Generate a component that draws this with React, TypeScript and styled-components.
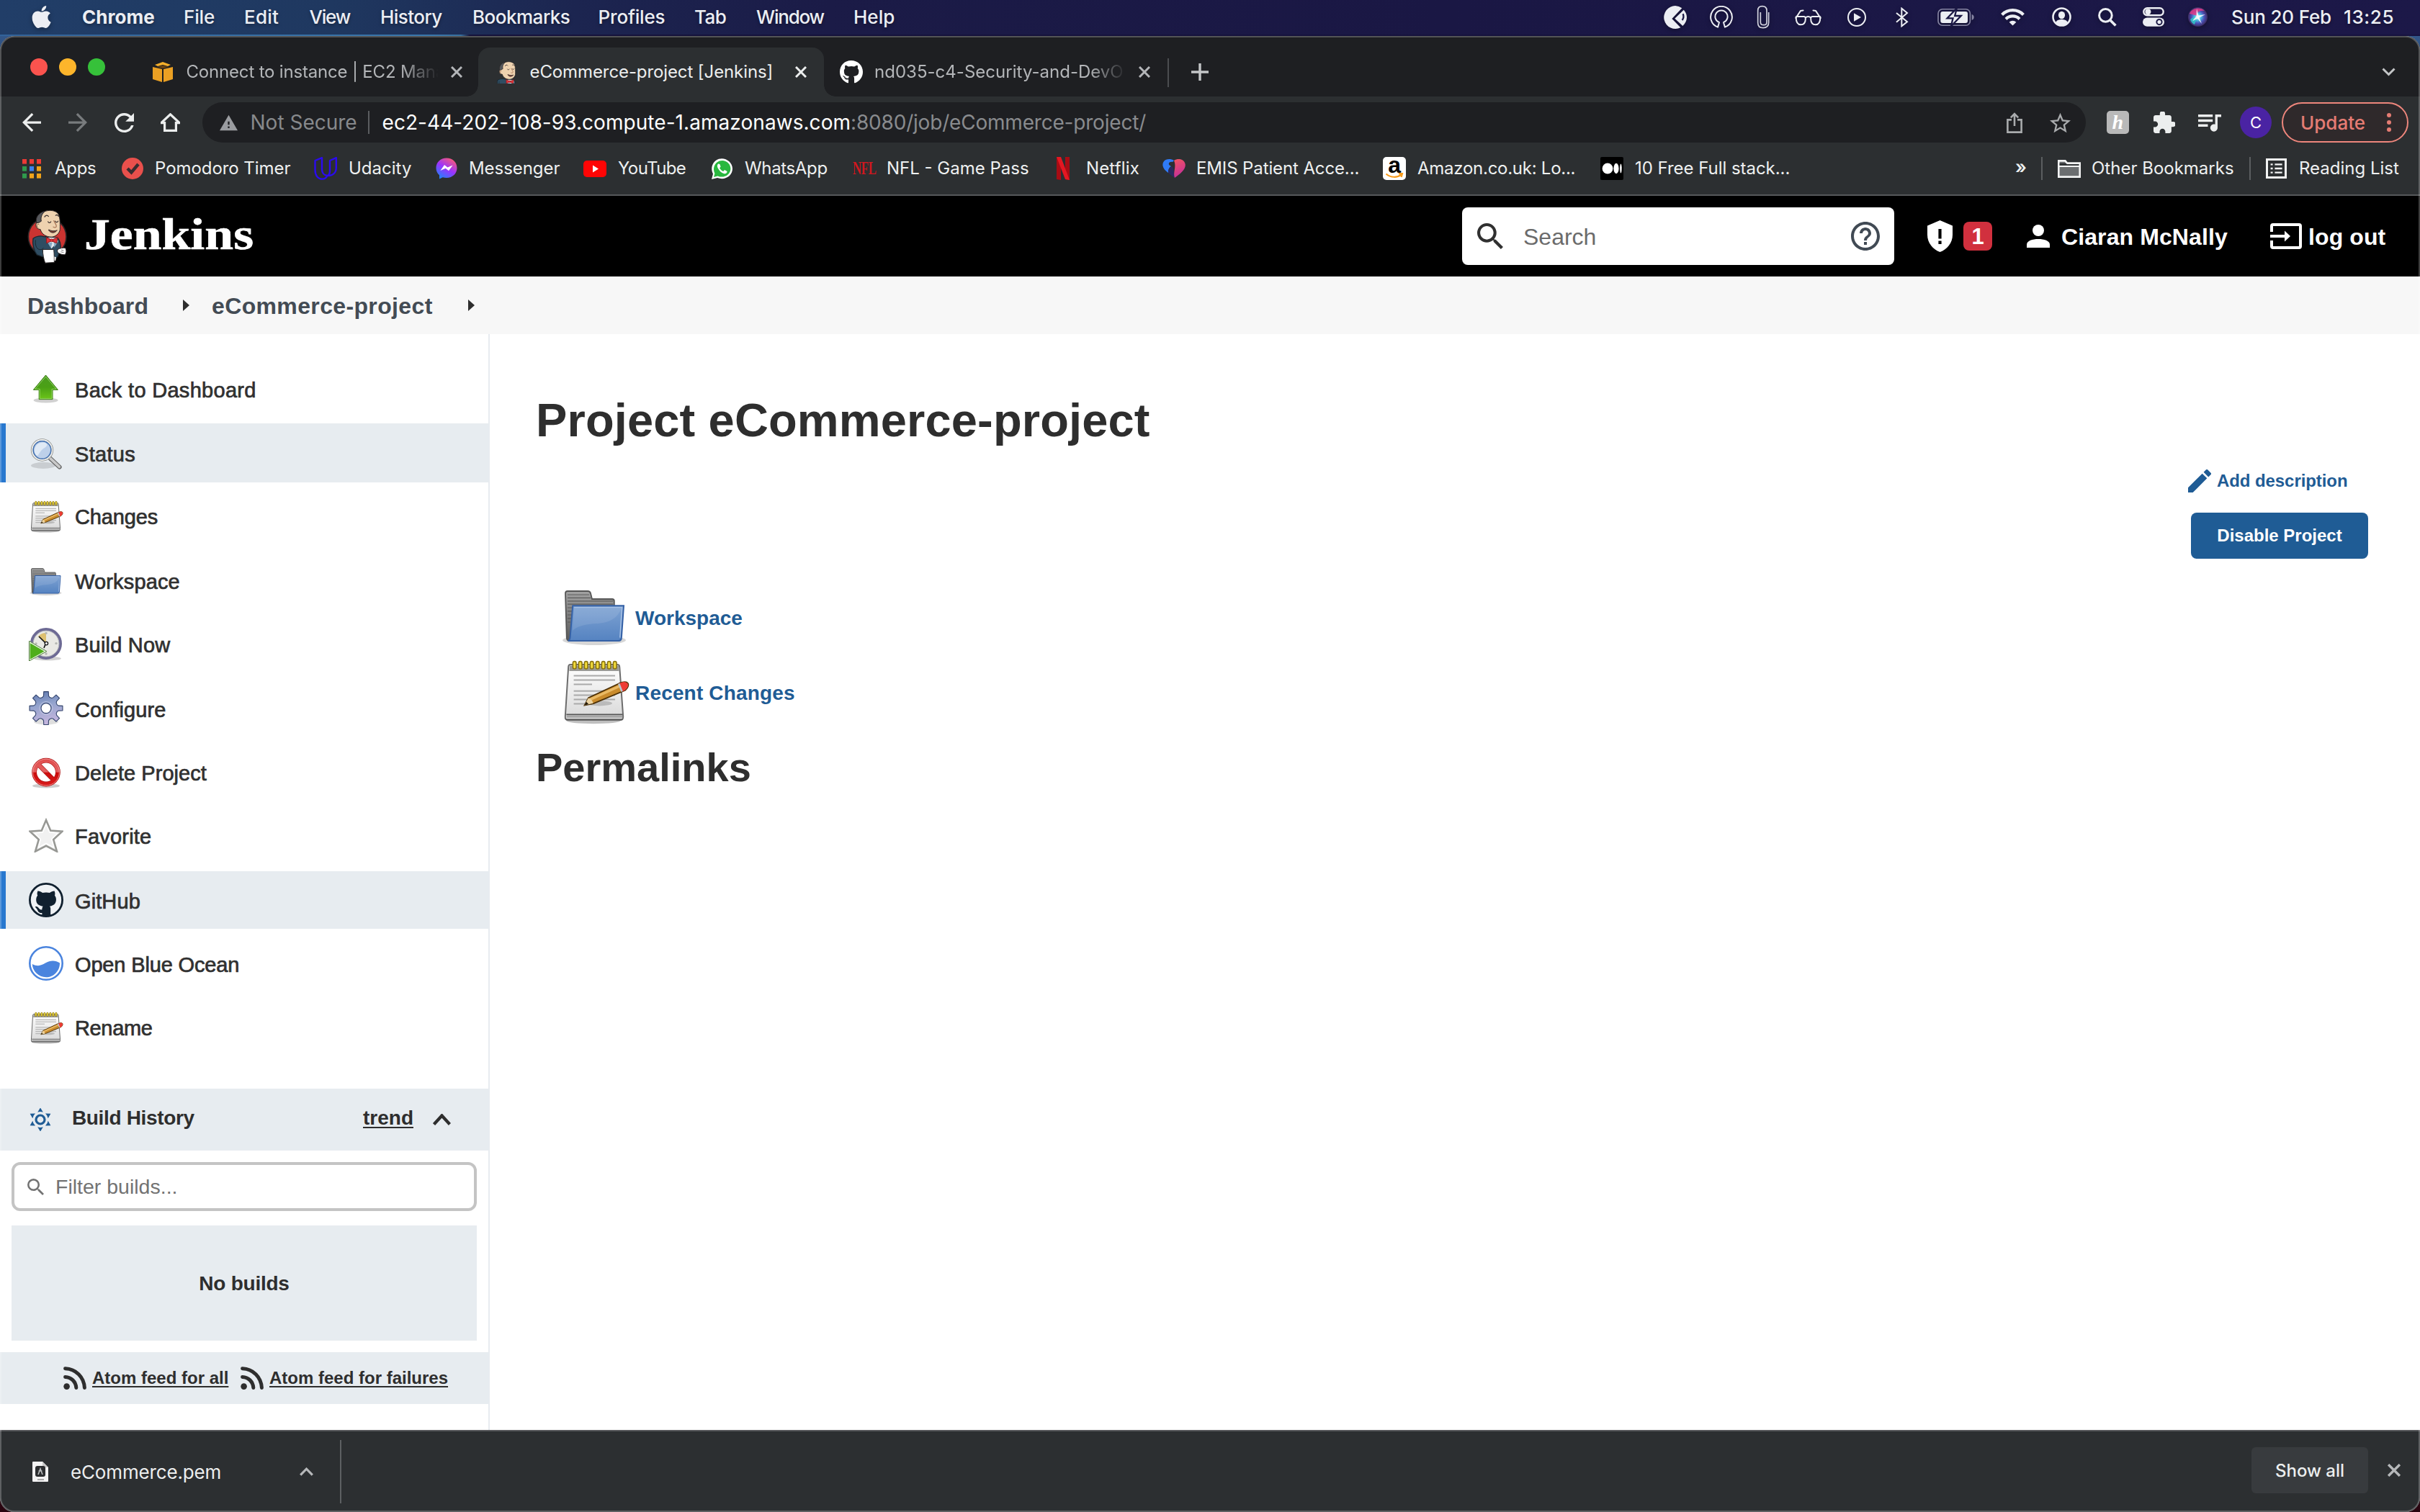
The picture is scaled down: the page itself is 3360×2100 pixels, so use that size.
import React from "react";
import styled, { createGlobalStyle, css } from "styled-components";
import {
  MdArrowBack, MdArrowForward, MdRefresh, MdWarning, MdStarBorder, MdExtension,
  MdQueueMusic, MdEdit, MdSearch, MdHelpOutline,
} from "react-icons/md";
import { FaGithub, FaApple } from "react-icons/fa";

const UI = `Inter, "Open Sans", sans-serif`;
const HELV = `"Liberation Sans", Arial, sans-serif`;

const Global = createGlobalStyle`
  html, body, #root { margin: 0; padding: 0; width: 3360px; height: 2100px; overflow: hidden; }
  body { background: #12060c; }
  * { box-sizing: border-box; }
  svg { display: block; flex: none; }
  h1, h2 { margin: 0; }
`;

const Desktop = styled.div`
  width: 3360px;
  height: 2100px;
  display: flex;
  flex-direction: column;
  background: linear-gradient(180deg, #3d6da3 0, #2c4a7a 80px, #2a0510 2000px);
  font-family: ${UI};
`;

/* ---------- menu bar ---------- */
const MenuBar = styled.div`
  height: 50px;
  flex: none;
  display: flex;
  align-items: center;
  padding: 0 37px 3px 42px;
  color: #eceef3;
  background:
    linear-gradient(90deg, #32639a 0, #3a78ad 600px, #38709f 640px, #15123a 652px, #17133f 100%) 0 48px / 100% 2px no-repeat,
    linear-gradient(90deg, #213e68 0, #1f3860 460px, #1c2550 800px, #1b1b47 1150px, #1a1744 2000px, #1c1848 100%);
  svg { filter: drop-shadow(0 2px 3px rgba(0, 0, 0, 0.35)); }
`;
const Slot = styled.span<{ $w: number; $ls?: number; $bold?: boolean }>`
  width: ${(p) => p.$w}px;
  flex: none;
  white-space: pre;
  font-size: 26px;
  line-height: 40px;
  font-weight: ${(p) => (p.$bold ? 700 : 500)};
  letter-spacing: ${(p) => p.$ls ?? 0}px;
  text-shadow: 0 2px 4px rgba(0, 0, 0, 0.35);
`;
const Spacer = styled.div`
  flex: 1;
`;
const StatusSlot = styled.span<{ $w: number }>`
  width: ${(p) => p.$w}px;
  flex: none;
  display: flex;
  align-items: center;
`;

/* ---------- window ---------- */
const Window = styled.div`
  position: relative;
  height: 2050px;
  flex: none;
  display: flex;
  flex-direction: column;
  border-radius: 20px;
  overflow: hidden;
  background: #fff;
  &::after {
    content: "";
    position: absolute;
    inset: 0;
    border: 2px solid rgba(255, 255, 255, 0.24);
    border-radius: 20px;
    pointer-events: none;
  }
`;
const TabStrip = styled.div`
  height: 84px;
  flex: none;
  display: flex;
  align-items: flex-start;
  background: #1e1f22;
`;
const Lights = styled.div`
  width: 188px;
  flex: none;
  display: flex;
  gap: 16px;
  padding: 31px 0 0 42px;
`;
const Light = styled.span<{ $c: string }>`
  width: 24px;
  height: 24px;
  border-radius: 50%;
  background: ${(p) => p.$c};
`;
const Tab = styled.div<{ $w: number; $active?: boolean; $pad: number }>`
  position: relative;
  width: ${(p) => p.$w}px;
  height: 68px;
  margin-top: 16px;
  padding: 0 24px 0 ${(p) => p.$pad}px;
  flex: none;
  display: flex;
  align-items: center;
  color: ${(p) => (p.$active ? "#eceeee" : "#b4b6b9")};
  ${(p) =>
    p.$active &&
    css`
      background: #2c2f31;
      border-radius: 16px 16px 0 0;
      &::before, &::after {
        content: "";
        position: absolute;
        bottom: 0;
        width: 16px;
        height: 16px;
      }
      &::before { left: -16px; background: radial-gradient(circle at 0 0, transparent 15.5px, #2c2f31 16px); }
      &::after { right: -16px; background: radial-gradient(circle at 100% 0, transparent 15.5px, #2c2f31 16px); }
    `}
`;
const TabIcon = styled.span<{ $w: number }>`
  width: ${(p) => p.$w}px;
  flex: none;
  display: flex;
`;
const TabTitle = styled.span<{ $w: number; $fade?: boolean; $ls: number }>`
  width: ${(p) => p.$w}px;
  margin-right: ${(p) => (p.$fade ? 17 : 0)}px;
  flex: none;
  overflow: hidden;
  white-space: nowrap;
  font-size: 24px;
  line-height: 34px;
  letter-spacing: ${(p) => p.$ls}px;
  ${(p) => p.$fade && css`mask-image: linear-gradient(90deg, #000 calc(100% - 52px), transparent 100%);`}
`;
const TabEdge = styled.span`
  width: 2px;
  height: 40px;
  margin-top: 31px;
  background: #4b4d50;
`;
const NewTab = styled.span`
  margin: 38px 0 0 31px;
`;
const TabMenu = styled.span`
  margin: 44px 34px 0 auto;
`;

const Toolbar = styled.div`
  height: 72px;
  flex: none;
  display: flex;
  align-items: center;
  padding: 0 16px 0 31px;
  background: #2c2f31;
  color: #eceeee;
`;
const NavSlot = styled.span<{ $w: number; $dim?: boolean }>`
  width: ${(p) => p.$w}px;
  flex: none;
  display: flex;
  ${(p) => p.$dim && css`color: #787b7d;`}
`;
const Omnibox = styled.div`
  width: 2615px;
  height: 56px;
  flex: none;
  display: flex;
  align-items: center;
  padding: 0 21px 0 24px;
  margin-right: 29px;
  border-radius: 28px;
  background: #1e1f22;
  color: #a9abad;
  font-size: 28px;
  line-height: 40px;
`;
const Insecure = styled.span`
  width: 163px;
  margin-left: 18px;
  color: #87898c;
`;
const OmniRule = styled.span`
  width: 2px;
  height: 32px;
  background: #5b5d60;
`;
const Url = styled.span`
  margin-left: 18px;
  color: #fff;
  letter-spacing: 0.06px;
`;
const UrlRest = styled.span`
  color: #898b8e;
  letter-spacing: -0.2px;
`;
const OmniEnd = styled.span`
  margin-left: auto;
  display: flex;
  align-items: center;
  gap: 38px;
`;
const Honey = styled.span`
  width: 32px;
  height: 32px;
  margin-right: 34px;
  border-radius: 5px;
  display: flex;
  align-items: center;
  justify-content: center;
  background: #b9b9b9;
  color: #fff;
  font: italic 700 28px/30px "Liberation Serif", serif;
`;
const Avatar = styled.span`
  width: 44px;
  height: 44px;
  margin-right: 14px;
  border-radius: 50%;
  display: flex;
  align-items: center;
  justify-content: center;
  background: #4a23a3;
  color: #fff;
  font-size: 22px;
`;
const UpdatePill = styled.span`
  width: 176px;
  height: 56px;
  flex: none;
  display: flex;
  align-items: center;
  padding: 1px 0 0 24px;
  border: 2.5px solid #ee867c;
  border-radius: 28px;
  background: #2f292b;
  color: #e57c73;
  font-size: 26px;
  font-weight: 500;
  svg { margin: -1px 0 0 29px; }
`;

const Bookmarks = styled.div`
  height: 66px;
  flex: none;
  display: flex;
  align-items: center;
  padding: 0 29px 8px 28px;
  border-bottom: 2px solid #55585a;
  background: #2c2f31;
  color: #eef0f0;
  font-size: 24px;
  line-height: 34px;
`;
const Bookmark = styled.span<{ $w: number; $pad?: number; $ls?: number }>`
  width: ${(p) => p.$w}px;
  flex: none;
  display: flex;
  align-items: center;
  white-space: nowrap;
  gap: ${(p) => p.$pad ?? 15}px;
  letter-spacing: ${(p) => p.$ls ?? -0.06}px;
`;
const Fav = styled.span`
  width: 32px;
  height: 32px;
  flex: none;
  display: flex;
  align-items: center;
  justify-content: center;
`;
const NflMark = styled.span`
  color: #d01820;
  font: 700 26px/26px "Liberation Serif", serif;
  letter-spacing: -1px;
  transform: scaleX(0.66);
`;
const AmazonMark = styled.span`
  width: 32px;
  height: 32px;
  border-radius: 5px;
  display: flex;
  flex-direction: column;
  align-items: center;
  background: #fff;
  color: #000;
  font: 700 32px/22px ${HELV};
`;
const More = styled.span`
  width: 36px;
  margin-left: auto;
  margin-bottom: 4px;
  font-size: 25px;
  font-weight: 600;
`;
const BarRule = styled.span`
  width: 2px;
  height: 32px;
  background: #5b5e60;
`;
const BarItem = styled.span<{ $w: number; $gap: number }>`
  width: ${(p) => p.$w}px;
  padding-left: 21px;
  display: flex;
  align-items: center;
  gap: ${(p) => p.$gap}px;
  white-space: nowrap;
`;

/* ---------- Jenkins page ---------- */
const Header = styled.header`
  height: 112px;
  flex: none;
  display: flex;
  align-items: center;
  padding: 0 38px;
  background: #000;
  color: #fff;
  font: 700 32px/40px ${HELV};
`;
const Brand = styled.span`
  margin: -4px 0 0 23px;
  font: 700 61px/80px "Liberation Serif", "DejaVu Serif", serif;
  transform: scaleX(1.175);
  transform-origin: 0 50%;
  -webkit-text-stroke: 0.6px #fff;
`;
const SearchBox = styled.div`
  width: 600px;
  height: 80px;
  margin: 0 45px 0 auto;
  padding: 0 20px 0 21px;
  border-radius: 8px;
  display: flex;
  align-items: center;
  background: #fff;
  color: #6b6b6b;
  font-weight: 400;
`;
const SearchHint = styled.span`
  flex: 1;
  padding-top: 2px;
  margin-left: 28px;
`;
const AlertCount = styled.span`
  width: 40px;
  height: 40px;
  margin: 0 48px 0 14px;
  border-radius: 8px;
  text-align: center;
  background: #d1303e;
  font-size: 31px;
  line-height: 42px;
`;
const HeaderText = styled.span<{ $w: number; $gap: number }>`
  width: ${(p) => p.$w}px;
  padding: 1px 0 0 ${(p) => p.$gap}px;
  white-space: nowrap;
  letter-spacing: 0.1px;
`;

const Crumbs = styled.nav`
  height: 80px;
  flex: none;
  display: flex;
  align-items: center;
  padding-left: 38px;
  background: #f7f7f7;
  color: #434b54;
  font: 700 32px/40px ${HELV};
`;
const Crumb = styled.span<{ $w: number; $ls?: number }>`
  width: ${(p) => p.$w}px;
  padding-top: 2px;
  letter-spacing: ${(p) => p.$ls ?? 0}px;
`;
const CrumbArrow = styled.span`
  width: 0;
  margin-right: 31px;
  border-left: 9px solid #2e2e2e;
  border-top: 8px solid transparent;
  border-bottom: 8px solid transparent;
`;

const Body = styled.div`
  flex: 1;
  display: flex;
  font-family: ${HELV};
`;
const Sidebar = styled.aside`
  width: 680px;
  flex: none;
  padding-top: 36px;
  box-shadow: inset -2px 0 #e7ebf0;
`;
const Tasks = styled.ul`
  list-style: none;
  margin: 0 0 38px;
  padding: 0;
  display: grid;
  grid-template-rows: 88px 88px 90px 88px 90px 88px 88px 90px 88px 88px 88px;
`;
const Task = styled.li<{ $on?: boolean; $h?: number }>`
  height: ${(p) => p.$h ?? 80}px;
  display: flex;
  align-items: center;
  gap: 16px;
  padding-left: 32px;
  border-left: 8px solid ${(p) => (p.$on ? "#2878cf" : "transparent")};
  background: ${(p) => (p.$on ? "#e7ecf0" : "transparent")};
  color: #303030;
`;
const TaskLabel = styled.span<{ $ls: number }>`
  padding-top: 4px;
  font-size: 29px;
  line-height: 36px;
  letter-spacing: ${(p) => p.$ls}px;
  -webkit-text-stroke: 0.7px #303030;
`;
const HistoryBar = styled.div`
  height: 86px;
  display: flex;
  align-items: center;
  padding: 0 54px 0 41px;
  background: #e7ecf0;
  color: #2e2e2e;
  font-weight: 700;
  font-size: 28px;
  line-height: 36px;
`;
const HistoryTitle = styled.span`
  flex: 1;
  margin: -5px 0 0 29px;
  letter-spacing: -0.35px;
`;
const ULink = styled.span`
  text-decoration: underline;
  text-decoration-thickness: 2px;
  text-underline-offset: 3px;
  text-decoration-skip-ink: none;
`;
const Trend = styled(ULink)`
  margin: -5px 27px 0 0;
`;
const Filter = styled.div`
  height: 68px;
  margin: 16px 18px 20px 16px;
  padding-left: 18px;
  border: 4px solid #c4c4c4;
  border-radius: 12px;
  display: flex;
  align-items: center;
  gap: 16px;
  color: #737373;
  font-size: 28.5px;
`;
const NoBuilds = styled.div`
  height: 160px;
  margin: 0 18px 16px 16px;
  padding-top: 1px;
  display: flex;
  align-items: center;
  justify-content: center;
  background: #e7ecf0;
  color: #2e2e2e;
  font-weight: 700;
  font-size: 28px;
  letter-spacing: -0.25px;
`;
const Feeds = styled.div`
  height: 72px;
  display: flex;
  align-items: center;
  padding-left: 88px;
  background: #e7ecf0;
  color: #2e2e2e;
  font-weight: 700;
  font-size: 24px;
  line-height: 30px;
`;
const FeedLink = styled(ULink)<{ $w: number }>`
  width: ${(p) => p.$w}px;
  margin-left: 8px;
  white-space: nowrap;
`;

const Main = styled.main`
  flex: 1;
  display: flex;
  flex-direction: column;
  padding: 80px 72px 0 64px;
  color: #2e2e2e;
`;
const Title = styled.h1`
  font: 700 65px/80px ${HELV};
  letter-spacing: 0.15px;
`;
const Actions = styled.div`
  width: 250px;
  margin: 28px 0 30px;
  align-self: flex-end;
  display: flex;
  flex-direction: column;
  gap: 28px;
  font-size: 24px;
  font-weight: 700;
`;
const AddDescription = styled.a`
  height: 32px;
  display: flex;
  align-items: center;
  gap: 8px;
  color: #1f5c95;
  white-space: nowrap;
  letter-spacing: -0.08px;
`;
const Button = styled.button`
  width: 246px;
  height: 64px;
  margin-left: 4px;
  padding: 0;
  border: 0;
  border-radius: 8px;
  background: #1f5c95;
  color: #fff;
  font: inherit;
`;
const Links = styled.div`
  display: flex;
  flex-direction: column;
  gap: 8px;
  padding-left: 34px;
`;
const BigLink = styled.a`
  height: 96px;
  display: flex;
  align-items: center;
  gap: 8px;
  color: #1f5c95;
  font-weight: 700;
  font-size: 28px;
`;
const BigLabel = styled.span<{ $ls: number }>`
  padding-top: 10px;
  letter-spacing: ${(p) => p.$ls}px;
`;
const SubTitle = styled.h2`
  margin-top: 30px;
  font: 700 56px/60px ${HELV};
`;

/* ---------- downloads ---------- */
const Shelf = styled.div`
  height: 114px;
  flex: none;
  display: flex;
  align-items: center;
  padding: 0 27px 0 45px;
  border-top: 2px solid #58595c;
  background: #2c2f31;
  color: #eceeee;
`;
const FileName = styled.span`
  width: 349px;
  padding: 1px 0 0 31px;
  font-size: 26px;
  letter-spacing: -0.15px;
`;
const ShelfRule = styled.span`
  width: 2px;
  height: 88px;
  margin-left: 37px;
  background: #5d6062;
`;
const ShowAll = styled.span`
  width: 162px;
  height: 64px;
  margin: 0 27px 4px auto;
  border-radius: 6px;
  display: flex;
  align-items: center;
  justify-content: center;
  background: #383b3e;
  font-size: 24px;
  font-weight: 500;
`;
const ShelfClose = styled.span`
  margin-bottom: 4px;
`;

/* ---------- drawings ---------- */
const Cross = ({ size = 16, color = "currentColor", sw = 3 }: { size?: number; color?: string; sw?: number }) => (
  <svg width={size} height={size} viewBox="0 0 16 16" stroke={color} strokeWidth={sw} fill="none">
    <path d="M1 1L15 15M15 1L1 15" />
  </svg>
);
const Chevron = ({ w, h, up, color, sw = 3 }: { w: number; h: number; up?: boolean; color: string; sw?: number }) => (
  <svg width={w} height={h} viewBox={`0 0 ${w} ${h}`} fill="none" stroke={color} strokeWidth={sw}>
    <path d={up ? `M1.5 ${h - 1.5}L${w / 2} 2.5L${w - 1.5} ${h - 1.5}` : `M1.5 1.5L${w / 2} ${h - 2.5}L${w - 1.5} 1.5`} />
  </svg>
);

const Butler = ({ w, h, view, disc }: { w: number; h: number; view: string; disc?: boolean }) => (
  <svg width={w} height={h} viewBox={view} strokeLinejoin="round" strokeLinecap="round">
    {disc && <circle cx="107" cy="143" r="79" fill="#cb3431" stroke="#2a2526" strokeWidth="5" />}
    <path d="M48 150C60 140 80 138 92 142L150 148C160 160 164 180 162 196L150 226L132 240L92 228L64 218C50 200 44 172 48 150Z" fill="#2f4d62" stroke="#1c2831" strokeWidth="4" />
    <path d="M58 158C56 180 62 200 84 196L90 190" fill="none" stroke="#1c2831" strokeWidth="3" />
    <path d="M108 160L124 192L152 162L148 148L112 146Z" fill="#dfe8ee" />
    <path d="M106 164L122 190L128 168Z" fill="#86a9c4" />
    <path d="M152 164L136 188L134 166Z" fill="#86a9c4" />
    <path d="M78 50C92 30 140 26 154 50C162 66 160 100 160 112C158 130 140 144 124 144C104 144 84 134 78 112C62 112 56 98 62 84L72 82Z" fill="#eed2af" stroke="#2a2526" strokeWidth="3" />
    <path d="M62 84C56 64 70 42 98 36C86 46 78 60 82 78L72 84Z" fill="#56585c" stroke="#2a2526" strokeWidth="3" />
    <path d="M72 92C64 86 60 98 68 106" fill="none" stroke="#8b5d43" strokeWidth="3" />
    <path d="M96 60C100 52 108 52 112 58M142 54C146 50 152 52 154 58" fill="none" stroke="#3b3130" strokeWidth="4" />
    <path d="M110 80C112 86 120 86 122 80M140 78C142 84 150 84 152 78" fill="none" stroke="#3b3130" strokeWidth="3.5" />
    <path d="M134 76C140 88 148 96 144 102C140 106 134 104 132 102" fill="none" stroke="#a36f50" strokeWidth="3.5" />
    <path d="M114 118C122 128 138 130 148 116C138 120 124 120 114 114Z" fill="#7b3d31" stroke="#3b3130" strokeWidth="3" />
    <path d="M103 146L104 170L124 160L146 170L150 146L126 156Z" fill="#e03238" stroke="#8f1a1c" strokeWidth="3" />
    <circle cx="125" cy="158" r="6" fill="#e03238" stroke="#8f1a1c" strokeWidth="2" />
    <path d="M88 196L134 196C136 216 136 238 136 250L98 252C92 236 88 216 88 196Z" fill="#fff" stroke="#2a2526" strokeWidth="3" />
    <path d="M136 226L144 228L142 242L137 244Z" fill="#f0f0f0" />
    <path d="M150 196C160 190 174 188 182 190C188 200 186 212 180 218C168 218 156 214 150 208Z" fill="#fff" stroke="#2a2526" strokeWidth="3" />
    <path d="M166 198L174 200M164 206L174 208" stroke="#777" strokeWidth="3" />
  </svg>
);

const Notepad = ({ size = 48 }: { size?: number }) => (
  <svg width={size} height={size} viewBox="0 0 48 48">
    <defs>
      <linearGradient id="paper" x1="0" y1="0" x2="0" y2="1"><stop offset="0" stopColor="#fff" /><stop offset="1" stopColor="#d8d8d8" /></linearGradient>
    </defs>
    <ellipse cx="23" cy="45.4" rx="19" ry="2.2" fill="#000" opacity="0.25" />
    <path d="M7 6.5H39.5Q41 6.5 41.1 8L43.6 42.5Q43.7 45 42 45H5Q3.2 45 3.4 42.5L5.6 8Q5.7 6.5 7 6.5Z" fill="url(#paper)" stroke="#6c6c6c" strokeWidth="1" />
    <path d="M6.4 7.2H40.5L40.8 11H6.2Z" fill="#9a9a96" />
    <path d="M4.2 41.2H43M3.8 44.6H43.2" stroke="#555" strokeWidth="0.8" />
    <path d="M4.4 42.6H43" stroke="#a5a5a5" strokeWidth="1.6" />
    <path d="M9.3 14.3H38M9.3 17.2H38M9.3 20.2H22M9.3 24.9H38M9.3 27.8H38M9.3 30.7H38M9.3 33.7H22" stroke="#aaa" strokeWidth="1" />
    {[9.8, 13.8, 17.8, 21.8, 25.8, 29.8, 33.8, 37.8].map((x) => (
      <rect key={x} x={x - 1.1} y="4.3" width="2.3" height="5.2" rx="1.1" fill="#f2dc3b" stroke="#8a7410" strokeWidth="0.8" />
    ))}
    <ellipse cx="27" cy="33.4" rx="9" ry="1.8" fill="#000" opacity="0.18" />
    <path d="M16.8 34.8L19.5 29.6L40.8 19.6Q45.5 17.6 47 19.6Q47.8 22 45 24.4L23 33.6Z" fill="#c98b2c" stroke="#4c3006" strokeWidth="0.9" />
    <path d="M20 30L41 20.6L42 22L21 31.6Z" fill="#e9b964" />
    <path d="M16.8 34.8L19.4 29.8Q22 30.4 22.8 33.4Z" fill="#ecd3a0" />
    <path d="M16.8 34.8L18 32.4L19.6 34Z" fill="#1e1406" />
    <path d="M40.6 19.8L42.8 25.3L44.9 24.4Q47.7 22 46.9 19.8Q45.2 17.8 42.4 19Z" fill="#ee3c35" />
    <path d="M40 20L42.2 25.5L43.4 25L41.2 19.5Z" fill="#bcc4cf" />
  </svg>
);
const Folder = ({ size = 48 }: { size?: number }) => (
  <svg width={size} height={size} viewBox="0 0 48 48">
    <defs>
      <linearGradient id="fold" x1="0" y1="0" x2="0" y2="1"><stop offset="0" stopColor="#7fa3d3" /><stop offset="1" stopColor="#5583c1" /></linearGradient>
      <linearGradient id="back" x1="0" y1="0" x2="0" y2="1"><stop offset="0" stopColor="#a2a2a2" /><stop offset="1" stopColor="#5a5a5a" /></linearGradient>
    </defs>
    <ellipse cx="23.5" cy="41.6" rx="22" ry="3.4" fill="#000" opacity="0.16" />
    <path d="M3.5 9Q3.5 7.5 5 7.5H19Q20.6 7.5 21 9L22 13H36Q37.4 13 37.4 14.4V30L6 42Q4.6 42 4.4 40Z" fill="url(#back)" stroke="#555" strokeWidth="0.9" />
    <path d="M5 10H20M5 12.2H21M5 14.4H36.6M5 16.6H36.6M5 19H8M5 21.4H8M5 24H8M5 26.4H8M5 29H7" stroke="#4f4f4f" strokeWidth="0.6" opacity="0.8" />
    <path d="M8.6 17.6H44L42.4 40.2Q42.2 42 40.6 42H5.4Q6.6 41.6 6.8 39.4Z" fill="url(#fold)" stroke="#3561a6" strokeWidth="1" />
    <path d="M9.6 18.8H42.8L41.4 39.8" fill="none" stroke="#a9c3e6" strokeWidth="0.7" />
    <path d="M9.6 19.2H42.4Q39 29 26 30Q13 30.4 8.4 35Z" fill="#fff" opacity="0.1" />
  </svg>
);
const UpArrow = () => (
  <svg width="48" height="48" viewBox="0 0 48 48">
    <defs><linearGradient id="up" x1="0" y1="0" x2="0" y2="1"><stop offset="0" stopColor="#4b9c22" /><stop offset="0.5" stopColor="#4aa015" /><stop offset="1" stopColor="#6cc51a" /></linearGradient></defs>
    <ellipse cx="23.6" cy="40" rx="17" ry="3.4" fill="#000" opacity="0.18" />
    <path d="M23.5 5L40.4 25.4H33V38.6H14.2V25.4H6.4Z" fill="url(#up)" stroke="#377a10" strokeWidth="1" strokeLinejoin="round" />
    <path d="M23.5 7L38.2 24.4H32V37.6H15.2V24.4H8.6Z" fill="none" stroke="#9fdc74" strokeWidth="0.8" />
  </svg>
);
const Magnifier = () => (
  <svg width="48" height="48" viewBox="0 0 48 48">
    <ellipse cx="20" cy="41.5" rx="17" ry="4.4" fill="#000" opacity="0.13" />
    <path d="M29 31L42.6 43.6" stroke="#666" strokeWidth="6" strokeLinecap="round" />
    <path d="M29.6 31.4L42.4 43.4" stroke="#c9c9c9" strokeWidth="3.6" strokeLinecap="round" />
    <circle cx="18.5" cy="20" r="14" fill="#bdd0ea" stroke="#8d8f8d" strokeWidth="3.4" />
    <circle cx="18.5" cy="20" r="14" fill="none" stroke="#eeeeec" strokeWidth="1.8" />
    <circle cx="18.5" cy="20" r="12.2" fill="none" stroke="#4272b5" strokeWidth="1.4" />
    <path d="M8 22C8 13 14 9.6 20 9.6C26 10 27 14 22 17C16 20 14 27 12 28Q8 26 8 22Z" fill="#e3ecf7" opacity="0.9" />
  </svg>
);
const ClockPlay = () => (
  <svg width="48" height="48" viewBox="0 0 48 48">
    <ellipse cx="26" cy="44.5" rx="19" ry="3" fill="#000" opacity="0.18" />
    <circle cx="24" cy="24" r="20" fill="#e9e9e4" stroke="#6d6a94" strokeWidth="4" />
    <circle cx="24" cy="24" r="18" fill="none" stroke="#aeb0b8" strokeWidth="1" />
    <path d="M24 23V9Q17 9 13 14Z" fill="#ddc070" />
    <circle cx="24" cy="9.4" r="1.7" fill="#b5b7b2" /><circle cx="38" cy="23.6" r="1.7" fill="#b5b7b2" />
    <circle cx="24" cy="38" r="1.7" fill="#b5b7b2" /><circle cx="10" cy="24" r="1.7" fill="#b5b7b2" />
    <path d="M14 14L23.6 23.4L21 30" stroke="#111" strokeWidth="1.6" fill="none" />
    <circle cx="24.4" cy="23.6" r="2.2" fill="#fff" stroke="#111" strokeWidth="1.3" />
    <path d="M0.8 21.4L23.6 34.6L0.8 47.4Z" fill="#4fae1b" stroke="#f6fff0" strokeWidth="1.8" />
    <path d="M0.5 20.4L24.8 34.6L0.5 48Z" fill="none" stroke="#3c6a26" strokeWidth="0.9" />
  </svg>
);
const gearPath = (() => {
  let d = "";
  for (let i = 0; i < 8; i++) {
    const a = (i * Math.PI) / 4 - Math.PI / 2;
    [[-0.3, 16], [-0.2, 17.6], [-0.14, 23.2], [0.14, 23.2], [0.2, 17.6], [0.3, 16]].forEach(([o, r], k) => {
      d += `${i + k === 0 ? "M" : "L"}${(24 + Math.cos(a + o) * r).toFixed(2)} ${(23.6 + Math.sin(a + o) * r).toFixed(2)}`;
    });
  }
  return d + "Z M31 23.6A7 7 0 1 0 17 23.6A7 7 0 1 0 31 23.6Z";
})();
const Gear = () => (
  <svg width="48" height="48" viewBox="0 0 48 48">
    <defs><linearGradient id="gear" x1="0" y1="0" x2="0.2" y2="1"><stop offset="0" stopColor="#5d77ad" /><stop offset="0.45" stopColor="#93a3cd" /><stop offset="1" stopColor="#c3b5dd" /></linearGradient></defs>
    <ellipse cx="24" cy="42.4" rx="17" ry="4" fill="#000" opacity="0.13" />
    <path d={gearPath} fill="url(#gear)" fillRule="evenodd" stroke="#33446d" strokeWidth="1.1" strokeLinejoin="round" />
    <circle cx="24" cy="23.6" r="9" fill="none" stroke="#cfd6ea" strokeWidth="0.8" opacity="0.8" />
  </svg>
);
const Forbidden = () => (
  <svg width="48" height="48" viewBox="0 0 48 48">
    <defs><linearGradient id="ban" gradientUnits="userSpaceOnUse" x1="0" y1="5" x2="0" y2="44"><stop offset="0" stopColor="#e04a4a" /><stop offset="0.49" stopColor="#e46060" /><stop offset="0.52" stopColor="#cc0c0c" /><stop offset="1" stopColor="#d81c1c" /></linearGradient></defs>
    <ellipse cx="24" cy="43.4" rx="19" ry="3" fill="#000" opacity="0.2" />
    <circle cx="24" cy="24.6" r="16.4" fill="#fff" stroke="#a91212" strokeWidth="6.8" />
    <path d="M13.5 14L34.5 35.2" stroke="#a91212" strokeWidth="6.6" />
    <path d="M12.5 13L35.5 36.2" stroke="url(#ban)" strokeWidth="5.2" />
    <circle cx="24" cy="24.6" r="16.4" fill="none" stroke="url(#ban)" strokeWidth="5.6" />
    <circle cx="24" cy="24.6" r="18.4" fill="none" stroke="#f2a0a0" strokeWidth="0.8" />
  </svg>
);
const Star = () => (
  <svg width="48" height="48" viewBox="0 0 48 48">
    <path d="M24 3L30.2 17.6L46.6 18.6L34.2 30L39 46.6L24 38.8L9 46.6L13.8 30L1.4 18.6L17.8 17.6Z" fill="#f1f1f1" stroke="#979894" strokeWidth="2.6" />
    <path d="M24 9L28.8 20L40 21L31.6 29.4L34.6 41L24 35.4L13.4 41L16.4 29.4L8 21L19.2 20Z" fill="none" stroke="#fff" strokeWidth="1.4" />
  </svg>
);
const Octocat = () => (
  <svg width="48" height="48" viewBox="0 0 48 48">
    <circle cx="24" cy="24" r="22.6" fill="#fff" fillOpacity="0.35" stroke="#10202f" strokeWidth="2.8" />
    <path d="M12.4 11.4C14.6 11.2 17 12.4 19 14C22 13.2 26 13.2 29 14C31 12.4 33.6 11.2 35.6 11.4C36.6 13.6 36.6 16 36 17.8C38.6 21 38.4 25.4 36.6 28.6C35 31.2 32.2 32.2 29 32.8C30.4 34.4 30.2 36 30.2 38V46H18.4V42C13.6 42.6 13 39.6 11.6 37C10.8 35.6 9.4 34.6 8.8 33.4C11 32.4 12.6 33.6 14 35.6C15 37 16 37.8 18.4 37.2C18.4 35.2 18.8 34 19.6 32.8C16 32.2 13 31.2 11.4 28.6C9.8 25.4 9.6 21 12.2 17.8C11.4 16 11.4 13.6 12.4 11.4Z" fill="#10202f" />
  </svg>
);
const Ocean = () => (
  <svg width="48" height="48" viewBox="0 0 48 48">
    <circle cx="24" cy="24" r="22.7" fill="#fff" stroke="#4a84de" strokeWidth="2.6" />
    <path d="M4.8 25C12 28.6 17 27.4 23 23.6C30 19.4 37 19.6 43 23.4C43.2 34.4 34.6 43.2 24 43.2C13.6 43.2 5.2 35 4.8 25Z" fill="#4a84de" />
  </svg>
);
const Rss = () => (
  <svg width="32" height="32" viewBox="0 0 32 32" fill="none" stroke="#2e2e2e" strokeWidth="5" strokeLinecap="round">
    <circle cx="4.6" cy="27.6" r="4.3" fill="#2e2e2e" stroke="none" />
    <path d="M2.6 14.4C11 14.8 17.2 21 17.8 29.4M2.6 2.7C17.4 3.2 28.6 14.6 29.4 29.4" />
  </svg>
);
const Sun = () => (
  <svg width="30" height="32" viewBox="0 0 30 32" fill="#1f5c95">
    <circle cx="15" cy="16" r="6" fill="none" stroke="#1f5c95" strokeWidth="3.2" />
    {[0, 60, 120, 180, 240, 300].map((a) => (
      <path key={a} d="M15 -0.6L18.8 5.8Q15 4.4 11.2 5.8Z" transform={`rotate(${a} 15 16)`} />
    ))}
  </svg>
);

const bookmarks: { label: string; w: number; pad?: number; ls?: number; icon: React.ReactNode }[] = [
  { label: "Apps", w: 140, pad: 16, ls: -0.3, icon: (
    <svg width="26" height="27" viewBox="0 0 26 27">
      {["#ec3a35", "#ec3a35", "#ec3a35", "#2f9a4c", "#3b82f0", "#f0a31a", "#2f9a4c", "#f0a31a", "#f0a31a"].map((c, i) => (
        <rect key={i} x={(i % 3) * 10} y={Math.floor(i / 3) * 10} width="6" height="6.6" fill={c} />
      ))}
    </svg>) },
  { label: "Pomodoro Timer", w: 268, icon: (
    <svg width="30" height="30" viewBox="0 0 30 30"><circle cx="15" cy="15" r="15" fill="#e9504c" /><path d="M8 15L13.4 20.4L23 9" fill="none" stroke="#3a2d30" strokeWidth="4.4" /></svg>) },
  { label: "Udacity", w: 168, pad: 16, ls: 0, icon: (
    <svg width="32" height="32" viewBox="0 0 32 32" fill="none" stroke="#2b0af0" strokeWidth="2.4" strokeLinejoin="round"><path d="M1.5 5L11 1.2V17C11 22 14 25.6 18.5 26C20.8 25.4 22 22.6 22 19V5L30.8 1.2V15C30.8 22 26 26 18.5 26C17 29 14.4 30.6 11.6 30.6C5 30.6 1.5 25 1.5 18Z" /></svg>) },
  { label: "Messenger", w: 206, icon: (
    <svg width="30" height="30" viewBox="0 0 30 30"><defs><linearGradient id="msg" x1="0.2" y1="1" x2="0.8" y2="0"><stop offset="0" stopColor="#1c86ff" /><stop offset="0.5" stopColor="#9a33ff" /><stop offset="1" stopColor="#ff5c70" /></linearGradient></defs><path d="M15 0.5C6.5 0.5 0.5 6.6 0.5 14.2C0.5 18.2 2 21.6 5 24.2V29.5L9.8 27.2C11.4 27.7 13 27.9 15 27.9C23.5 27.9 29.5 21.8 29.5 14.2C29.5 6.6 23.5 0.5 15 0.5Z" fill="url(#msg)" /><path d="M6.4 18L12 10L16.4 13.6L23.6 10.4L18 18.2L13.6 14.8Z" fill="#fff" /></svg>) },
  { label: "YouTube", w: 176, pad: 16, ls: -0.6, icon: (
    <svg width="32" height="23" viewBox="0 0 32 23"><rect width="32" height="23" rx="5" fill="#ff0505" /><path d="M13 6.6V16.4L21 11.5Z" fill="#fff" /></svg>) },
  { label: "WhatsApp", w: 198, pad: 16, ls: -0.35, icon: (
    <svg width="31" height="31" viewBox="0 0 31 31"><path d="M1 30L3 22.6C-1 15 2 5 11 1.8C20 -1 30 6 30 15.2C30 25 20 32 9 28Z" fill="#fff" /><path d="M4 27L5.4 22C2 15 5 7 12 4.6C20 2 27.6 8 27.4 15.4C27 24 18 29 9.4 25.4Z" fill="#29b83f" /><path d="M10.4 8.4C8.6 9.6 8.4 12 10 15C12 18.6 15 21.4 18.6 22.2C21 22.6 22.6 21 22.6 19L19 17L17.2 19C15 18.2 13 16.2 12.2 14.2L13.6 12.6L12.4 9Z" fill="#fff" /></svg>) },
  { label: "NFL - Game Pass", w: 276, ls: 0, icon: <NflMark>NFL</NflMark> },
  { label: "Netflix", w: 154, pad: 16, ls: 0.15, icon: (
    <svg width="18" height="32" viewBox="0 0 18 32"><path d="M0 0H6V32L0 31ZM12 0H18V32L12 31Z" fill="#a80c14" /><path d="M0 0H6L18 32L12 31Z" fill="#e51722" /></svg>) },
  { label: "EMIS Patient Acce...", w: 306, pad: 15, ls: -0.12, icon: (
    <svg width="32" height="28" viewBox="0 0 32 28"><defs><linearGradient id="emis" x1="0" y1="0" x2="0.3" y2="1"><stop offset="0" stopColor="#f2555f" /><stop offset="1" stopColor="#c52f9a" /></linearGradient></defs><path d="M9 1C3 1 0 5 0.4 10C1 14 4 17 8 20C8 15 9 13 12 11C7 9 8 4 14 5L16 3C14 1.6 12 1 9 1Z" fill="#2f7bf6" /><path d="M8 20C8 15 10 13 13 11C17 14 15 20 17 27C13 24 10 22 8 20Z" fill="#2a2a5e" /><path d="M16 3C22 -1 31 1 31.8 9C32 16 24 22 17 27C14 20 20 12 16 3Z" fill="url(#emis)" /></svg>) },
  { label: "Amazon.co.uk: Lo...", w: 302, pad: 16, ls: -0.26, icon: (
    <AmazonMark>a<svg width="26" height="9" viewBox="0 0 26 9"><path d="M1.5 1.5C8 7 17 7 22.5 2.6M19 1.2L24 1.2L22.6 6" fill="none" stroke="#f79b1c" strokeWidth="2.2" /></svg></AmazonMark>) },
  { label: "10 Free Full stack...", w: 300, pad: 16, ls: -0.04, icon: (
    <svg width="32" height="32" viewBox="0 0 32 32"><rect width="32" height="32" rx="2" fill="#000" /><ellipse cx="10" cy="16" rx="7.4" ry="7.6" fill="#fff" /><ellipse cx="22" cy="16" rx="3.6" ry="7.2" fill="#fff" /><ellipse cx="28.4" cy="16" rx="1.3" ry="6.4" fill="#fff" /></svg>) },
];

const tasks: { label: string; ls: number; icon: React.ReactNode; on?: boolean; h?: number }[] = [
  { label: "Back to Dashboard", ls: 0.3, icon: <UpArrow /> },
  { label: "Status", ls: 0.3, icon: <Magnifier />, on: true, h: 82 },
  { label: "Changes", ls: -0.15, icon: <Notepad /> },
  { label: "Workspace", ls: 0.15, icon: <Folder /> },
  { label: "Build Now", ls: 0.22, icon: <ClockPlay /> },
  { label: "Configure", ls: 0.08, icon: <Gear /> },
  { label: "Delete Project", ls: 0.06, icon: <Forbidden /> },
  { label: "Favorite", ls: 0.2, icon: <Star /> },
  { label: "GitHub", ls: 0.1, icon: <Octocat />, on: true },
  { label: "Open Blue Ocean", ls: -0.16, icon: <Ocean /> },
  { label: "Rename", ls: -0.35, icon: <Notepad /> },
];

const menus: [string, number, number][] = [
  ["File", 84, -0.14], ["Edit", 90.5, 0.2], ["View", 98.5, -1.2], ["History", 128, -0.55],
  ["Bookmarks", 174.5, -0.5], ["Profiles", 133.5, -0.17], ["Tab", 86, -0.6], ["Window", 135, -1.2], ["Help", 80, 0],
];

const StatusIcons = () => (
  <>
    <StatusSlot $w={64}>
      <svg width="32" height="32" viewBox="60 24 96 96"><path fill="#eceef3" d="M108 24A48 48 0 1 0 130 115L94 78L136 34A48 48 0 0 0 108 24Z" /><path fill="#eceef3" d="M143 41L106 77L139 108C150 97 156 86 156 72C156 60 151 49 143 41Z" /><path d="M140 58Q146 72 137 84" stroke="#1b1845" strokeWidth="7" fill="none" /></svg>
    </StatusSlot>
    <StatusSlot $w={64}>
      <svg width="32" height="31" viewBox="252 26 96 94" fill="none" stroke="#eceef3" strokeWidth="6"><path d="M285 116A45 45 0 1 1 315 116L309 96A26 26 0 1 0 291 96Z" strokeLinejoin="round" /></svg>
    </StatusSlot>
    <StatusSlot $w={54}>
      <svg width="20" height="33" viewBox="442 22 60 99" fill="none" stroke="#d4d5e0" strokeWidth="5"><path d="M495 52V95C495 111 485 117 472 117C458 117 450 110 450 96V45C450 33 457 27 468 27C480 27 487 33 487 45V93C487 101 482 105 475 105C466 105 461 101 461 93V52" /></svg>
    </StatusSlot>
    <StatusSlot $w={73}>
      <svg width="37" height="24" viewBox="605 36 112 70" fill="none" stroke="#eceef3" strokeWidth="6" strokeLinecap="round" strokeLinejoin="round"><path d="M609 74L629 44L640 42M713 74L693 44L682 42" /><path d="M610 70Q609 68 616 68L644 68Q650 69 650 76C650 94 644 102 630 102C616 102 610 92 610 70ZM712 70Q713 68 706 68L678 68Q672 69 672 76C672 94 678 102 692 102C706 102 712 92 712 70ZM650 72Q661 64 672 72" /></svg>
    </StatusSlot>
    <StatusSlot $w={67}>
      <svg width="26" height="26" viewBox="825 36 78 78"><circle cx="864" cy="75" r="36" fill="none" stroke="#eceef3" strokeWidth="6" /><path d="M852 58L882 75L852 92Z" fill="#eceef3" /></svg>
    </StatusSlot>
    <StatusSlot $w={58}>
      <svg width="18" height="28" viewBox="1028 24 54 84" fill="none" stroke="#eceef3" strokeWidth="6"><path d="M1031 48L1076 85L1053 103V29L1076 48L1031 86" /></svg>
    </StatusSlot>
    <StatusSlot $w={88}>
      <svg width="51" height="26" viewBox="1199 34 154 76"><rect x="1202" y="38" width="134" height="68" rx="18" fill="none" stroke="#8685a3" strokeWidth="5" /><path d="M1343 60Q1352 63 1352 72Q1352 81 1343 84Z" fill="#8685a3" /><rect x="1212" y="48" width="114" height="48" rx="9" fill="#eceef3" /><path d="M1280 34L1240 76H1264L1256 110L1298 66H1272Z" fill="#eceef3" stroke="#1b1845" strokeWidth="7" /></svg>
    </StatusSlot>
    <StatusSlot $w={71}>
      <svg width="33" height="25" viewBox="0 0 33 25" fill="none" stroke="#eceef3" strokeWidth="4.2"><path d="M1.6 9.4A21 21 0 0 1 31.4 9.4M7 15.4A13.4 13.4 0 0 1 26 15.4" /><path d="M11.6 19.8A7 7 0 0 1 21.4 19.8L16.5 24.6Z" fill="#eceef3" stroke="none" /></svg>
    </StatusSlot>
    <StatusSlot $w={64}>
      <svg width="27" height="27" viewBox="0 0 27 27"><circle cx="13.5" cy="13.5" r="12" fill="none" stroke="#eceef3" strokeWidth="2.6" /><ellipse cx="13.5" cy="11" rx="4.6" ry="5.2" fill="#eceef3" /><path d="M5 21.4C7 17.6 10 17 13.5 17S20 17.6 22 21.4A12 12 0 0 1 5 21.4Z" fill="#eceef3" /></svg>
    </StatusSlot>
    <StatusSlot $w={62}>
      <svg width="26" height="26" viewBox="0 0 26 26" fill="none" stroke="#eceef3" strokeWidth="3"><circle cx="10.4" cy="10.4" r="8.8" /><path d="M16.6 16.8L24.4 24.6" strokeWidth="3.6" /></svg>
    </StatusSlot>
    <StatusSlot $w={62}>
      <svg width="30" height="27" viewBox="0 0 30 27"><rect x="1.3" y="1.3" width="27.4" height="10" rx="5" fill="none" stroke="#eceef3" strokeWidth="2.4" /><circle cx="7.4" cy="6.3" r="4" fill="#eceef3" /><rect y="14.4" width="30" height="12.4" rx="6.2" fill="#eceef3" /><circle cx="23" cy="20.6" r="3.6" fill="none" stroke="#1b1845" strokeWidth="2" /></svg>
    </StatusSlot>
    <StatusSlot $w={61}>
      <svg width="29" height="29" viewBox="0 0 29 29"><defs><radialGradient id="siri"><stop offset="0" stopColor="#eafcff" /><stop offset="0.3" stopColor="#51c8e8" /><stop offset="0.65" stopColor="#4a50b8" /><stop offset="1" stopColor="#3b2a5c" /></radialGradient></defs><circle cx="14.5" cy="14.5" r="13.6" fill="url(#siri)" /><path d="M3 10C6 2 18 0 24 6C17 5 12 8 14 13Z" fill="#e23a86" opacity="0.85" /><path d="M4 18C8 14 12 14 14 14L10 25C7 24 5 21 4 18Z" fill="#2fd0c8" opacity="0.8" /><path d="M13 3L15.4 12.6L25 11L16.6 15.6L20 24L14.2 17L7 20L12.4 13.6Z" fill="#fff" opacity="0.85" /></svg>
    </StatusSlot>
  </>
);

export default function App() {
  return (
    <Desktop>
      <Global />
      <MenuBar>
        <StatusSlot $w={72}>
          <FaApple size={31} viewBox="4 32 372 448" />
        </StatusSlot>
        <Slot $w={141} $bold $ls={0.05}>Chrome</Slot>
        {menus.map(([label, w, ls]) => (
          <Slot key={label} $w={w} $ls={ls}>{label}</Slot>
        ))}
        <Spacer />
        <StatusIcons />
        <Slot $w={156} $ls={-0.15}>Sun 20 Feb</Slot>
        <Slot $w={69} $ls={0.6}>13:25</Slot>
      </MenuBar>

      <Window>
        <TabStrip>
          <Lights>
            <Light $c="#fb534e" />
            <Light $c="#fdb52b" />
            <Light $c="#36c13a" />
          </Lights>
          <Tab $w={476} $pad={24}>
            <TabIcon $w={46.5}>
              <svg width="28" height="28" viewBox="0 0 28 28"><path d="M0 7L13 10V28L0 24ZM28 7L15 10V28L28 24Z" fill="#eba023" /><path d="M14 0L25 4L21 6L14 4L7 6L3 4Z" fill="#f4ae2a" /><path d="M14 5L22 7L14 9L6 7Z" fill="#6d4410" /></svg>
            </TabIcon>
            <TabTitle $w={350} $fade $ls={-0.18}>Connect to instance | EC2 Mana</TabTitle>
            <Cross />
          </Tab>
          <Tab $w={480} $active $pad={26}>
            <TabIcon $w={45.5}><Butler w={28} h={32} view="50 26 116 144" /></TabIcon>
            <TabTitle $w={368} $ls={-0.1}>eCommerce-project [Jenkins]</TabTitle>
            <Cross />
          </Tab>
          <Tab $w={477} $pad={22}>
            <TabIcon $w={48}><FaGithub size={32} viewBox="0 8 496 496" color="#fff" /></TabIcon>
            <TabTitle $w={350} $fade $ls={0.02}>nd035-c4-Security-and-DevO</TabTitle>
            <Cross />
          </Tab>
          <TabEdge />
          <NewTab>
            <svg width="24" height="24" viewBox="0 0 24 24" stroke="#c4c6c8" strokeWidth="3.4"><path d="M12 0V24M0 12H24" /></svg>
          </NewTab>
          <TabMenu><Chevron w={19} h={12} color="#c4c6c8" /></TabMenu>
        </TabStrip>

        <Toolbar>
          <NavSlot $w={64}><MdArrowBack size={26} viewBox="4 4 16 16" /></NavSlot>
          <NavSlot $w={64} $dim><MdArrowForward size={26} viewBox="4 4 16 16" /></NavSlot>
          <NavSlot $w={64}><MdRefresh size={27} viewBox="4 4 16 16" /></NavSlot>
          <NavSlot $w={57.5}>
            <svg width="27" height="26" viewBox="0 0 27 26" fill="none" stroke="currentColor" strokeWidth="3.2"><path d="M1 13.6H5.6V24.4H21.4V13.6H26L13.5 1.8Z" strokeLinejoin="miter" /></svg>
          </NavSlot>
          <Omnibox>
            <MdWarning size={25} viewBox="1 2 22 19" color="#9a9ca0" />
            <Insecure>Not Secure</Insecure>
            <OmniRule />
            <Url>ec2-44-202-108-93.compute-1.amazonaws.com<UrlRest>:8080/job/eCommerce-project/</UrlRest></Url>
            <OmniEnd>
              <svg width="22" height="29" viewBox="0 0 22 29" fill="none" stroke="currentColor" strokeWidth="2.6"><path d="M7 10.4H1.4V27.6H20.6V10.4H15M11 19V2.4M5.8 7.4L11 2L16.2 7.4" /></svg>
              <MdStarBorder size={29} viewBox="2 2 20 19" />
            </OmniEnd>
          </Omnibox>
          <Honey>h</Honey>
          <NavSlot $w={62}><MdExtension size={30} viewBox="2 1.5 20.5 20.5" /></NavSlot>
          <NavSlot $w={58}><MdQueueMusic size={32} viewBox="3 5 19 15" /></NavSlot>
          <Avatar>C</Avatar>
          <UpdatePill>
            Update
            <svg width="8" height="28" viewBox="0 0 8 28" fill="currentColor"><circle cx="4" cy="4" r="3" /><circle cx="4" cy="14" r="3" /><circle cx="4" cy="24" r="3" /></svg>
          </UpdatePill>
        </Toolbar>

        <Bookmarks>
          {bookmarks.map((b) => (
            <Bookmark key={b.label} $w={b.w} $pad={b.pad} $ls={b.ls}>
              <Fav>{b.icon}</Fav>
              {b.label}
            </Bookmark>
          ))}
          <More>»</More>
          <BarRule />
          <BarItem $w={287} $gap={15}>
            <svg width="32" height="25" viewBox="0 0 32 25"><path d="M1.3 23.6V1.4H10.4L13 4.6H30.7V23.6Z" fill="#6b6e70" stroke="#f2f3f3" strokeWidth="2.6" /><path d="M2 9H30" stroke="#f2f3f3" strokeWidth="2" /><path d="M2.6 4.8H11L13 6H29.4V7.8H2.6Z" fill="#2c2f31" /></svg>
            Other Bookmarks
          </BarItem>
          <BarRule />
          <BarItem $w={206} $gap={17}>
            <svg width="29" height="28" viewBox="0 0 29 28"><rect x="1.5" y="1.5" width="26" height="25" fill="none" stroke="#f2f3f3" strokeWidth="3" /><path d="M6.6 8.4H9.6M12.4 8.4H22.6M6.6 14H9.6M12.4 14H22.6M6.6 19.6H9.6M12.4 19.6H22.6" stroke="#f2f3f3" strokeWidth="2.4" /></svg>
            Reading List
          </BarItem>
        </Bookmarks>

        <Header>
          <Butler w={56} h={79} view="24 24 168 236" disc />
          <Brand>Jenkins</Brand>
          <SearchBox>
            <MdSearch size={36} viewBox="3 3 17.5 17.5" color="#303030" />
            <SearchHint>Search</SearchHint>
            <MdHelpOutline size={40} viewBox="2 2 20 20" color="#414a54" />
          </SearchBox>
          <svg width="37" height="44" viewBox="0 0 37 44"><path d="M18.5 0L36 7.6V20C36 31 28.6 40.6 18.5 44C8.4 40.6 1 31 1 20V7.6Z" fill="#fff" /><path d="M18.5 12V25.4M18.5 28.6V33" stroke="#000" strokeWidth="4.2" /></svg>
          <AlertCount>1</AlertCount>
          <svg width="32" height="32" viewBox="0 0 32 32" fill="#fff"><circle cx="16" cy="8" r="8" /><path d="M0 32V27.6C0 22.4 8 20 16 20S32 22.4 32 27.6V32Z" /></svg>
          <HeaderText $w={306} $gap={16}>Ciaran McNally</HeaderText>
          <svg width="44" height="36" viewBox="0 0 44 36" fill="none" stroke="#fff" strokeWidth="4"><path d="M2 12V4Q2 2 4 2H40Q42 2 42 4V32Q42 34 40 34H4Q2 34 2 32V24M0 18H22" /><path d="M20 10.4L28 18L20 25.6Z" fill="#fff" stroke="none" /></svg>
          <HeaderText $w={126} $gap={9}>log out</HeaderText>
        </Header>

        <Crumbs>
          <Crumb $w={216} $ls={0.1}>Dashboard</Crumb>
          <CrumbArrow />
          <Crumb $w={356} $ls={0.36}>eCommerce-project</Crumb>
          <CrumbArrow />
        </Crumbs>

        <Body>
          <Sidebar>
            <Tasks>
              {tasks.map((t) => (
                <Task key={t.label} $on={t.on} $h={t.h}>
                  {t.icon}
                  <TaskLabel $ls={t.ls}>{t.label}</TaskLabel>
                </Task>
              ))}
            </Tasks>
            <HistoryBar>
              <Sun />
              <HistoryTitle>Build History</HistoryTitle>
              <Trend>trend</Trend>
              <Chevron w={25} h={16} up color="#2e2e2e" sw={4.4} />
            </HistoryBar>
            <Filter>
              <MdSearch size={23} viewBox="3 3 17.5 17.5" color="#737373" />
              Filter builds...
            </Filter>
            <NoBuilds>No builds</NoBuilds>
            <Feeds>
              <Rss />
              <FeedLink $w={206}>Atom feed for all</FeedLink>
              <Rss />
              <FeedLink $w={260}>Atom feed for failures</FeedLink>
            </Feeds>
          </Sidebar>
          <Main>
            <Title>Project eCommerce-project</Title>
            <Actions>
              <AddDescription>
                <MdEdit size={32} viewBox="3 3 18 18" />
                Add description
              </AddDescription>
              <Button>Disable Project</Button>
            </Actions>
            <Links>
              <BigLink><Folder size={96} /><BigLabel $ls={0}>Workspace</BigLabel></BigLink>
              <BigLink><Notepad size={96} /><BigLabel $ls={0.17}>Recent Changes</BigLabel></BigLink>
            </Links>
            <SubTitle>Permalinks</SubTitle>
          </Main>
        </Body>

        <Shelf>
          <svg width="22" height="28" viewBox="0 0 22 28"><path d="M1 0H14L22 8V27Q22 28 21 28H1Q0 28 0 27V1Q0 0 1 0Z" fill="#f3f3f3" /><path d="M14 0L22 8H15Q14 8 14 7Z" fill="#c9c9c9" /><rect x="4" y="6" width="14" height="15" rx="3" fill="#2b2d2f" /><path d="M8 18L11 10L14 18M8.6 13H13.4" stroke="#b9bcbd" strokeWidth="1.6" fill="none" /><path d="M7 25H16" stroke="#999" strokeWidth="1.6" /></svg>
          <FileName>eCommerce.pem</FileName>
          <svg width="19" height="12" viewBox="0 0 19 12" fill="none" stroke="#b6b8ba" strokeWidth="3.2"><path d="M1.2 10.6L9.5 2.2L17.8 10.6" /></svg>
          <ShelfRule />
          <ShowAll>Show all</ShowAll>
          <ShelfClose><Cross size={18} color="#b6b8ba" sw={3} /></ShelfClose>
        </Shelf>
      </Window>
    </Desktop>
  );
}
